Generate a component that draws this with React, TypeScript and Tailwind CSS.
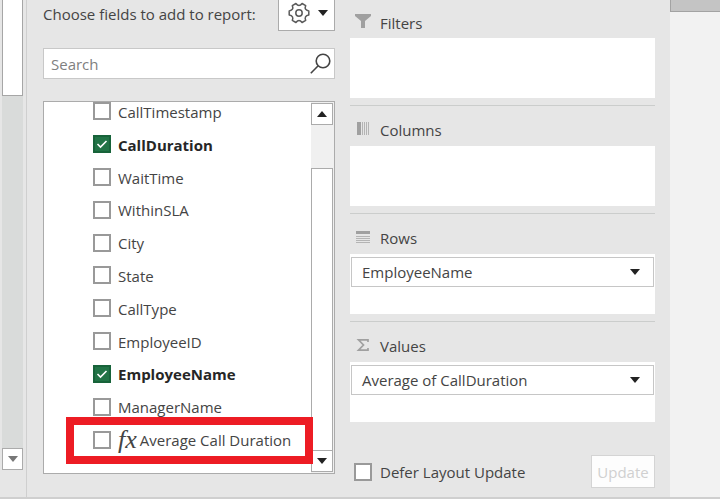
import type { ReactNode } from 'react';
import { clsx } from 'clsx';

interface Field {
  name: string;
  checked?: boolean;
  measure?: boolean;
}

const FIELDS: Field[] = [
  { name: 'CallTimestamp' },
  { name: 'CallDuration', checked: true },
  { name: 'WaitTime' },
  { name: 'WithinSLA' },
  { name: 'City' },
  { name: 'State' },
  { name: 'CallType' },
  { name: 'EmployeeID' },
  { name: 'EmployeeName', checked: true },
  { name: 'ManagerName' },
  { name: 'Average Call Duration', measure: true },
];

function Caret({ up, className }: { up?: boolean; className?: string }) {
  return (
    <svg viewBox="0 0 10 6" className={clsx('h-[6px] w-[10px] shrink-0', className)} fill="currentColor" aria-hidden="true">
      <path d={up ? 'M0 6 5 0l5 6z' : 'M0 0h10L5 6z'} />
    </svg>
  );
}

function GearIcon() {
  return (
    <svg viewBox="0 0 22 22" className="h-[22px] w-[22px]" fill="none" stroke="#5a5a5a" strokeWidth="1.5" strokeLinejoin="round" aria-hidden="true">
      <path d="M20.8 8.900V13.100Q15.800 13.800 17.700 18.400L14.100 20.500Q11 16.500 7.900 20.500L4.300 18.400Q6.200 13.800 1.200 13.100V8.900Q6.200 8.200 4.300 3.600L7.900 1.500Q11 5.500 14.100 1.500L17.700 3.600Q15.800 8.200 20.800 8.900Z" />
      <circle cx="11" cy="11" r="3.200" />
    </svg>
  );
}

function SearchIcon() {
  return (
    <svg viewBox="0 0 21 21" className="h-[21px] w-[21px]" fill="none" stroke="#444" strokeWidth="1.6" aria-hidden="true">
      <circle cx="13" cy="8" r="6.800" />
      <path d="M8.200 12.800.8 20.200" />
    </svg>
  );
}

function FilterIcon() {
  return (
    <svg viewBox="0 0 16 16" className="h-4 w-4" fill="#a0a0a0" aria-hidden="true">
      <path d="M0 1h16v2l-6 5v7H6V8L0 3z" />
    </svg>
  );
}

function ColumnsIcon() {
  return (
    <svg viewBox="0 0 16 16" className="h-4 w-4" fill="#a0a0a0" aria-hidden="true">
      <path d="M2 2h4v13H2z" />
      <path fill="#b4b4b4" d="M7 2h1v13H7zM9 2h1v13H9zM11 2h1v13h-1zM13 2h1v13h-1z" />
    </svg>
  );
}

function RowsIcon() {
  return (
    <svg viewBox="0 0 16 16" className="h-4 w-4" fill="#a0a0a0" aria-hidden="true">
      <path d="M1 3h14v3H1z" />
      <path fill="#b4b4b4" d="M1 8h14v1H1zM1 10h14v1H1zM1 12h14v1H1zM1 14h14v1H1z" />
    </svg>
  );
}

function SigmaIcon() {
  return (
    <svg viewBox="0 0 16 16" className="h-4 w-4" fill="none" stroke="#a0a0a0" strokeWidth="1.7" aria-hidden="true">
      <path d="M13 6V3.800H3.500L8.500 9l-5 5.200H13V12" />
    </svg>
  );
}

function Checkbox({ id, checked }: { id: string; checked?: boolean }) {
  return (
    <span className="grid shrink-0">
      <input
        id={id}
        type="checkbox"
        defaultChecked={checked}
        className="peer col-start-1 row-start-1 h-[18px] w-[18px] appearance-none border-2 border-[#999] bg-white checked:border-[#17633a] checked:bg-[#217346]"
      />
      <svg
        viewBox="0 0 18 18"
        className="pointer-events-none invisible col-start-1 row-start-1 h-[18px] w-[18px] peer-checked:visible"
        fill="none"
        stroke="#fff"
        strokeWidth="1.6"
        aria-hidden="true"
      >
        <path d="m4.500 9 3 3 6-6" />
      </svg>
    </span>
  );
}

function FieldRow({ field }: { field: Field }) {
  return (
    <li className="relative flex items-center gap-[7px] pl-[49px]">
      <Checkbox id={field.name} checked={field.checked} />
      <label
        htmlFor={field.name}
        className={clsx('flex items-center gap-[3px] pt-px whitespace-nowrap', field.checked && 'font-bold text-[#262626]')}
      >
        {field.measure && (
          <span className="font-['Liberation_Serif',serif] text-[26px] leading-5 italic">fx</span>
        )}
        {field.name}
      </label>
      {field.measure && (
        <span className="pointer-events-none absolute -top-[6px] -right-[2px] -bottom-2 left-[22px] z-10 border-8 border-[#ed1c24]" />
      )}
    </li>
  );
}

function DropArea({ title, icon, value, first }: { title: string; icon: ReactNode; value?: string; first?: boolean }) {
  return (
    <section className={clsx('pb-[7px]', !first && 'border-t border-[#cbcdcc]')}>
      <h2 className={clsx('flex items-center gap-[9px] pt-1 pl-[5px]', first ? 'h-[38px]' : 'h-10')}>
        {icon}
        <span className="pt-1">{title}</span>
      </h2>
      <div className="h-[60px] bg-white px-px pt-[3px]">
        {value && (
          <button
            type="button"
            aria-haspopup="menu"
            className="flex h-[30px] w-full items-center justify-between border border-[#c6c6c6] bg-white pr-[13px] pl-[10px]"
          >
            {value}
            <Caret className="text-[#222]" />
          </button>
        )}
      </div>
    </section>
  );
}

export default function App() {
  return (
    <div className="flex h-screen min-h-[499px] border-b-2 border-[#cfcfcf] bg-[#e6e6e6] font-['Open_Sans','Noto_Sans',sans-serif] text-[15px] leading-5 text-[#444]">
      <div className="flex w-[27px] shrink-0 flex-col border-r border-[#cfcfcf] pr-[3px] pb-[27px] pl-[2px]">
        <div className="h-24 border border-t-0 border-[#a6a6a6] bg-white" />
        <div className="flex-1 bg-[#d9dbda]" />
        <button type="button" aria-label="Scroll down" className="flex h-[22px] items-center justify-center border border-[#ababab] bg-white text-[#777]">
          <Caret />
        </button>
      </div>

      <main className="grid flex-1 grid-cols-[292fr_305fr] gap-[15px] pr-[15px] pl-4">
        <div className="flex min-w-0 flex-col">
          <div className="flex h-[31px] items-center justify-between">
            <h1 className="pb-1 whitespace-nowrap">Choose fields to add to report:</h1>
            <button
              type="button"
              aria-label="Tools"
              className="flex h-[31px] w-[57px] items-center justify-center gap-2 border border-t-0 border-[#ababab] bg-white pb-1 pl-[3px] text-[#222]"
            >
              <GearIcon />
              <Caret />
            </button>
          </div>

          <div className="mt-[17px] flex h-[31px] items-center border border-[#c8c8c8] bg-white pr-[3px]">
            <input
              type="text"
              aria-label="Search"
              placeholder="Search"
              className="min-w-0 flex-1 pl-[7px] outline-none placeholder:text-[#808080]"
            />
            <SearchIcon />
          </div>

          <div className="mt-[22px] flex h-[373px] overflow-hidden border border-[#ababab] bg-white">
            <ul className="-mt-[7px] grid h-[361px] flex-1 grid-rows-11">
              {FIELDS.map((field) => (
                <FieldRow key={field.name} field={field} />
              ))}
            </ul>
            <div className="flex w-[23px] flex-col bg-[#f0f0f0] pt-px pr-px pb-px">
              <button type="button" aria-label="Scroll up" className="flex h-[22px] items-center justify-center border border-[#ababab] bg-white text-[#222]">
                <Caret up />
              </button>
              <div className="h-[43px]" />
              <div className="flex-1 border border-b-0 border-[#ababab] bg-white" />
              <button type="button" aria-label="Scroll down" className="flex h-[22px] items-center justify-center border border-[#ababab] bg-white text-[#222]">
                <Caret />
              </button>
            </div>
          </div>
        </div>

        <div className="min-w-0">
          <DropArea first title="Filters" icon={<FilterIcon />} />
          <DropArea title="Columns" icon={<ColumnsIcon />} />
          <DropArea title="Rows" icon={<RowsIcon />} value="EmployeeName" />
          <DropArea title="Values" icon={<SigmaIcon />} value="Average of CallDuration" />
          <div className="mt-[26px] flex items-center justify-between pl-1">
            <div className="flex items-center gap-2">
              <Checkbox id="defer" />
              <label htmlFor="defer">Defer Layout Update</label>
            </div>
            <button type="button" disabled className="h-[33px] w-16 border border-[#d4d4d4] bg-[#fdfdfd] text-[#d0d0d0]">
              Update
            </button>
          </div>
        </div>
      </main>

      <div className="flex w-[50px] shrink-0 flex-col bg-[#f2f2f2]">
        <div className="h-3 border-b border-l border-[#a3a3a3] bg-[#c4c4c4]" />
      </div>
    </div>
  );
}
